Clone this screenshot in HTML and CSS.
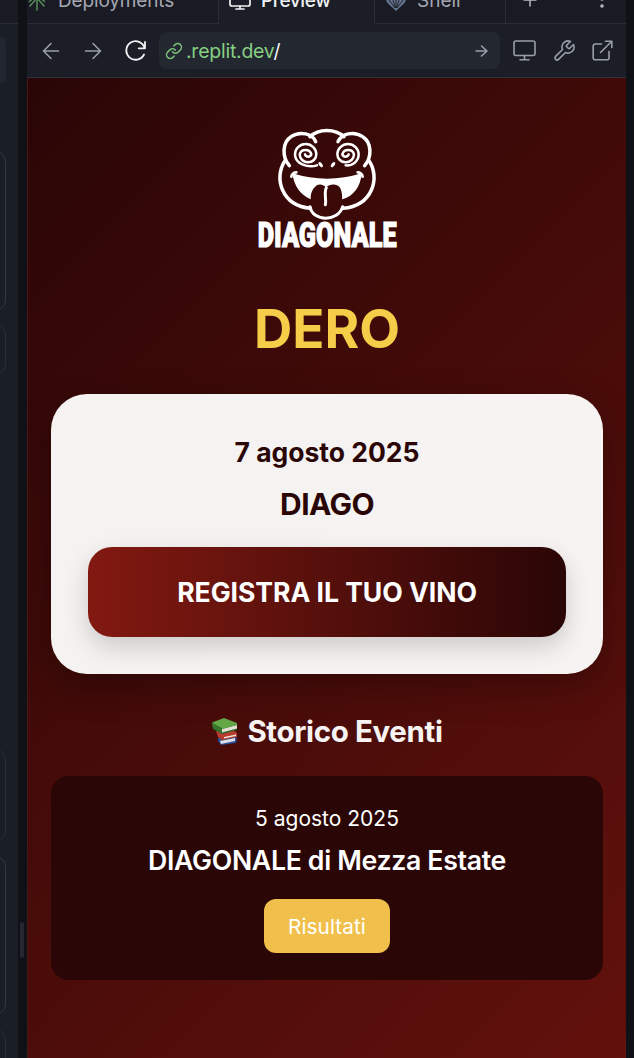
FILE: index.html
```html
<!DOCTYPE html>
<html lang="it">
<head>
<meta charset="utf-8">
<title>Preview</title>
<link rel="stylesheet" href="styles.css">
</head>
<body>
<div class="workspace">
  <aside class="sidebar">
    <div class="side-tab"></div>
    <div class="side-chip"></div>
    <div class="side-card tall"></div>
    <div class="side-card small"></div>
    <div class="side-card medium"></div>
    <div class="side-card large"></div>
    <div class="side-card last"></div>
  </aside>
  <div class="gutter"><span class="handle"></span></div>
  <section class="pane">
    <nav class="tabs">
      <div class="tab deploy">
        <svg class="i-deploy" width="20" height="22" viewBox="0 0 20 22" fill="none" stroke="#57905a" stroke-width="1.5" stroke-linecap="round" stroke-linejoin="round"><path d="M10 20V4M5 8l5-5 5 5M2.500 11.500 10 5l7.500 6.500M3 16l7-8 7 8"/></svg>
        <span>Deployments</span>
      </div>
      <div class="tab preview">
        <svg width="22" height="22" viewBox="0 0 22 22" fill="none" stroke="#f0f1f3" stroke-width="1.700" stroke-linecap="round" stroke-linejoin="round"><rect x="1" y="2" width="20" height="14" rx="2"/><path d="M11 16v3M7 19h8"/></svg>
        <span>Preview</span>
      </div>
      <div class="tab shell">
        <svg width="22" height="22" viewBox="0 0 22 22"><path d="M8.500 18.500C3 14 .5 11 .5 7.500 1.500 3 5 1 11 1s9.500 2 10.500 6.500c0 3.500-2.500 6.500-8 11L11 21z" fill="#64758f"/><path d="M10 18 2.500 8M10.500 18 6 4M11 18V2M11.500 18 16 4M12 18l7.500-10" fill="none" stroke="#191a23" stroke-width=".9"/></svg>
        <span>Shell</span>
      </div>
      <div class="tab tools">
        <svg width="16" height="16" viewBox="0 0 16 16" stroke="#b6bac3" stroke-width="1.500" stroke-linecap="round"><path d="M8 2v12M2 8h12"/></svg>
        <svg width="6" height="20" viewBox="0 0 6 20" fill="#b6bac3"><circle cx="3" cy="3" r="1.800"/><circle cx="3" cy="10" r="1.800"/><circle cx="3" cy="17" r="1.800"/></svg>
      </div>
    </nav>
    <div class="toolbar">
      <svg class="nav-icon" width="18" height="18" viewBox="0 0 18 18"><path d="M16.500 9H1.700M9 1.500 1.500 9 9 16.500"/></svg>
      <svg class="nav-icon forward" width="18" height="18" viewBox="0 0 18 18"><path d="M1.500 9h14.800M9 1.500 16.500 9 9 16.500"/></svg>
      <svg class="nav-icon reload" width="24" height="22" viewBox="0 0 24 22"><path d="M22 2v6.300h-6.300M21.600 8A9.300 9.300 0 1 0 21 14.500"/></svg>
      <div class="address">
        <svg class="link" width="18" height="18" viewBox="0 0 24 24"><path d="M10 13a5 5 0 0 0 7.540.54l3-3a5 5 0 0 0-7.070-7.070l-1.720 1.710M14 11a5 5 0 0 0-7.540-.54l-3 3a5 5 0 0 0 7.070 7.070l1.710-1.710"/></svg>
        <span class="url">.replit.dev<b>/</b></span>
        <svg class="go" width="13" height="12" viewBox="0 0 13 12"><path d="M1 6h11M6.500 1l5.500 5-5.500 5"/></svg>
      </div>
      <svg class="tool monitor" width="23" height="21" viewBox="0 0 23 21"><rect x="1" y="1" width="21" height="14.500" rx="2"/><path d="M11.500 15.500v4M7 19.700h9"/></svg>
      <svg class="tool wrench" width="24" height="24" viewBox="0 0 24 24"><path d="M14.700 6.300a1 1 0 0 0 0 1.400l1.600 1.600a1 1 0 0 0 1.400 0l3.770-3.770a6 6 0 0 1-7.940 7.940l-6.910 6.910a2.120 2.120 0 0 1-3-3l6.910-6.910a6 6 0 0 1 7.940-7.940l-3.760 3.760z"/></svg>
      <svg class="tool open" width="21" height="21" viewBox="0 0 21 21"><path d="M17 11.500v6.200a2 2 0 0 1-2 2H3.200a2 2 0 0 1-2-2V6a2 2 0 0 1 2-2h6.300M13.500 1.200h6.300v6.300M19.800 1.200 8.500 12.500"/></svg>
    </div>
    <main class="app">
      <svg class="logo" width="160" height="135" viewBox="0 0 480 405">
        <g fill="none" stroke="#fff" stroke-width="10.500" stroke-linecap="round" stroke-linejoin="round">
          <path d="M189 50C215 25 264 25 291 50"/>
          <path d="M127 137C105 112 105 67 132 50C160 31 197 42 206 65"/>
          <path d="M353 137C375 112 375 67 347 50C319 31 283 42 273 65"/>
          <path d="M114 122C80 172 102 257 191 265M366 122C400 172 378 257 288 265"/>
          <path d="M133 170C134 162 141 157 148 157M347 170C346 162 339 157 332 157" stroke-width="8"/>
          <path d="M210 136C184 144 144 133 144 103A32 31 0 0 1 208 103A25 24 0 0 1 158 103A18 17 0 0 1 193 103A10 10 0 0 1 174 103" stroke-width="7.500"/>
          <path d="M296 136C320 138 335 121 335 103A32 31 0 0 0 271 103A25 24 0 0 0 321 103A18 17 0 0 0 286 103A10 10 0 0 0 305 103" stroke-width="7.500"/>
        </g>
        <ellipse cx="221" cy="134" rx="5" ry="9" transform="rotate(-35 221 134)" fill="#fff"/>
        <ellipse cx="258" cy="134" rx="5" ry="9" transform="rotate(35 258 134)" fill="#fff"/>
        <path d="M136 160Q240 192 344 160C341 200 320 228 287 238L191 238C162 226 141 200 136 160Z" fill="#fff"/>
        <path d="M203 202C215 187 231 196 237 202C250 189 275 192 280 205C292 230 285 286 250 293C208 301 189 261 191 236C191 218 197 208 203 202Z" fill="#3a0908"/>
        <path d="M189 260C197 306 274 306 287 260M238 203C230 220 239 237 235 254" fill="none" stroke="#fff" stroke-width="9" stroke-linecap="round"/>
        <text class="logo-name" x="32" y="380" textLength="417" lengthAdjust="spacingAndGlyphs">DIAGONALE</text>
      </svg>
      <h1>DERO</h1>
      <section class="event">
        <p class="date">7 agosto 2025</p>
        <h2>DIAGO</h2>
        <a class="register">REGISTRA IL TUO VINO</a>
      </section>
      <div class="history-head">
        <svg width="28" height="28" viewBox="0 0 28 28"><path d="m7 21 15-4 4 4-1 5-15 2-3-4z" fill="#2b4e94"/><path d="m9 24 15-3v3l-14 3z" fill="#dedfe4"/><path d="m5 14 2 6 4 3 15-3v-4l-5-4z" fill="#b83b2d"/><path d="m13 20 12-2.500v1.500L13 21.500z" fill="#eee5dc"/><path d="m1 6 1 6 9 5 15-4V8z" fill="#296b2d"/><path d="m11 12 15-4v3.500l-15 4z" fill="#e2ded3"/><path d="M1 5.500 13 1l13 5v2l-15 4z" fill="#63a747"/><path d="m1 6 10 5v5l-9-5z" fill="#38752c"/></svg>
        <h3>Storico Eventi</h3>
      </div>
      <section class="past">
        <p class="past-date">5 agosto 2025</p>
        <h4>DIAGONALE di Mezza Estate</h4>
        <a class="results">Risultati</a>
      </section>
    </main>
  </section>
</div>
</body>
</html>
```
FILE: styles.css
```css
* { box-sizing: border-box; }
body { margin: 0; background: #0e1116; font-family: Inter, sans-serif; overflow: hidden; }
h1, h2, h3, h4, p { margin: 0; white-space: nowrap; }
svg { display: block; flex: none; }
.workspace { display: grid; grid-template-columns: 18px 9px 599px; height: 1058px; }

.sidebar { background: #1a1e26; overflow: hidden; }
.side-tab { height: 24px; background: #191a23; border-bottom: 1px solid #2a2d36; }
.side-chip { width: 16px; height: 48px; margin: 12px 0 0 -10px; background: #222630; border-radius: 7px; }
.side-card { width: 26px; margin-left: -20px; border: 1px solid #2a2e37; border-radius: 11px; }
.tall { height: 160px; margin-top: 67px; border-color: #303c40; }
.small { height: 51px; margin-top: 13px; }
.medium { height: 93px; margin-top: 374px; }
.large { height: 159px; margin-top: 14px; border-color: #303c40; }
.last { height: 80px; margin-top: 14px; }
.gutter { background: #0f1116; padding: 922px 0 0 2px; }
.handle { display: block; width: 4px; height: 36px; border-radius: 2px; background: #252732; }

.pane { display: flex; flex-direction: column; overflow: hidden; }
.tabs { display: grid; grid-template-columns: 192px 156px 131px 120px; height: 24px; flex: none; background: #191a23; overflow: hidden; }
.tab { display: flex; height: 24px; color: #a4a8b2; font-size: 19px; line-height: 24px; border-right: 1px solid #2a2d36; border-bottom: 1px solid #2a2d36; }
.tab span { margin-top: -11px; }
.tab svg { margin-top: -10px; }
.deploy span { margin-left: 11px; letter-spacing: -.15px; }
.preview { background: #1b1e26; color: #f0f1f3; border-bottom-color: #1b1e26; padding-left: 10px; font-weight: 500; }
.preview span { margin-left: 10px; letter-spacing: -.4px; }
.tab.shell { padding-left: 10px; }
.shell span { margin-left: 10px; }
.tab.tools { border-right: 0; padding-left: 16px; }
.tools svg:first-child { margin-top: -8px; }
.tools svg:last-child { margin: -11px 0 0 61px; }

.toolbar { height: 54px; flex: none; display: flex; align-items: center; background: #1b1e26; border-bottom: 1px solid #30313a; padding-left: 15px; }
.toolbar svg path, .toolbar svg rect { fill: none; stroke: #999ea8; stroke-width: 1.600; stroke-linecap: round; stroke-linejoin: round; }
.forward { margin-left: 24px; }
.reload { margin-left: 21px; }
.toolbar .reload path { stroke: #f0f1f3; stroke-width: 1.800; }
.address { display: flex; align-items: center; width: 341px; height: 37px; margin-left: 12px; padding: 0 12px 0 6px; border-radius: 8px; background: #232730; }
.toolbar .link path { stroke: #79bc76; stroke-width: 2; }
.url { margin: 1px 0 0 3px; color: #86cf82; font-size: 19.500px; line-height: 24px; letter-spacing: -.25px; }
.url b { color: #f3f4f6; font-weight: 400; }
.go { margin-left: auto; }
.monitor { margin-left: 13px; }
.wrench { margin-left: 16px; }
.open { margin-left: 16px; }

.app { height: 980px; display: flex; flex-direction: column; align-items: center; padding: 42px 23px 0; border-left: 1px solid #44191b; background: linear-gradient(135deg, #2a0606 0%, #62110c 100%); }
.logo-name { font: 900 104px Roboto, sans-serif; fill: #fff; stroke: #fff; stroke-width: 3.500px; }
h1 { margin-top: 38px; font-size: 53px; line-height: 72px; font-weight: 700; color: #f5cd48; }
.event { width: 552px; height: 280px; margin-top: 29px; flex: none; border-radius: 36px; background: linear-gradient(135deg, #f4f3f1 50%, #f6f3f2 50%); box-shadow: 0 12px 36px rgba(0,0,0,.3); padding: 40px 37px 0; text-align: center; color: #2a0606; }
.date { font-size: 26.500px; line-height: 36px; font-weight: 700; letter-spacing: -.02px; }
h2 { margin-top: 14px; font-size: 30px; line-height: 40px; font-weight: 700; letter-spacing: -.6px; }
.register { display: block; height: 90px; margin-top: 23px; border-radius: 24px; color: #fff; background: linear-gradient(90deg, #821911, #2a0606); box-shadow: 0 10px 24px rgba(0,0,0,.17); font-size: 26.600px; line-height: 91px; font-weight: 700; letter-spacing: -.05px; }
.history-head { display: flex; height: 40px; margin-top: 37px; gap: 8px; align-items: center; color: #f6f3f2; }
h3 { font-size: 29.500px; line-height: 40px; font-weight: 700; letter-spacing: -.37px; }
.past { width: 552px; height: 204px; margin-top: 25px; display: flex; flex-direction: column; align-items: center; padding-top: 28px; border-radius: 18px; background: #2a0606; color: #fff; }
.past-date { font-size: 21px; line-height: 30px; }
h4 { margin-top: 8px; font-size: 26.700px; line-height: 36px; font-weight: 600; letter-spacing: -.34px; }
.results { width: 126px; height: 54px; margin-top: 21px; border-radius: 12px; background: #f1bf4b; font-size: 20.700px; line-height: 56px; text-align: center; font-weight: 400; letter-spacing: .1px; }
```
